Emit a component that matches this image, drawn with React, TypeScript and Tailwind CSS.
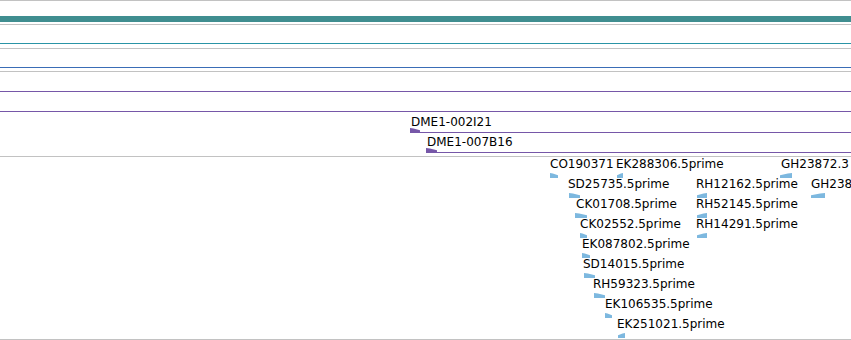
import { ReactNode } from "react"

type Strand = "+" | "-"

interface EstFeature {
  name: string
  row: number
  x: number
  shapeX: number
  width: number
  strand: Strand
}

// EST track, one label + arrowhead per feature, 20px rows
const estFeatures: EstFeature[] = [
  { name: "CO190371", row: 0, x: 550, shapeX: 550, width: 8, strand: "+" },
  { name: "EK288306.5prime", row: 0, x: 616, shapeX: 617, width: 6, strand: "-" },
  { name: "GH23872.3", row: 0, x: 781, shapeX: 780, width: 12, strand: "-" },
  { name: "SD25735.5prime", row: 1, x: 568, shapeX: 569, width: 11, strand: "+" },
  { name: "RH12162.5prime", row: 1, x: 696, shapeX: 697, width: 10, strand: "-" },
  { name: "GH23872.5prime", row: 1, x: 811, shapeX: 811, width: 14, strand: "-" },
  { name: "CK01708.5prime", row: 2, x: 576, shapeX: 575, width: 12, strand: "+" },
  { name: "RH52145.5prime", row: 2, x: 696, shapeX: 697, width: 10, strand: "-" },
  { name: "CK02552.5prime", row: 3, x: 580, shapeX: 580, width: 7, strand: "+" },
  { name: "RH14291.5prime", row: 3, x: 696, shapeX: 697, width: 10, strand: "-" },
  { name: "EK087802.5prime", row: 4, x: 582, shapeX: 582, width: 8, strand: "+" },
  { name: "SD14015.5prime", row: 5, x: 583, shapeX: 584, width: 11, strand: "+" },
  { name: "RH59323.5prime", row: 6, x: 593, shapeX: 594, width: 11, strand: "+" },
  { name: "EK106535.5prime", row: 7, x: 605, shapeX: 605, width: 7, strand: "+" },
  { name: "EK251021.5prime", row: 8, x: 617, shapeX: 618, width: 7, strand: "-" },
]

function arrowPoints(width: number, strand: Strand) {
  const w = width
  if (strand === "+") return `0,0 ${w * 0.35},0.6 ${w},2.2 ${w},5 0,5`
  return `${w},0 ${w * 0.65},0.6 0,2.2 0,5 ${w},5`
}

function Arrow(props: { width: number; strand: Strand; color: string }) {
  return (
    <svg width={props.width} height={5} className="block">
      <polygon points={arrowPoints(props.width, props.strand)} fill={props.color} />
    </svg>
  )
}

function Label(props: { children: ReactNode }) {
  return (
    <div className="whitespace-nowrap font-['DejaVu_Sans',sans-serif] text-[12px] leading-[12px] text-black">
      {props.children}
    </div>
  )
}

function Track(props: { height: string; children?: ReactNode }) {
  return (
    <div className={`relative shrink-0 border-t border-[#c2c2c2] ${props.height}`}>
      {props.children}
    </div>
  )
}

export default function App() {
  return (
    <div className="flex h-[340px] w-[851px] flex-col overflow-hidden bg-white">
      <Track height="h-[24px]">
        <div className="mt-[15px] h-[6px] bg-[#408e90]" />
      </Track>

      <Track height="h-[24px]">
        <div className="mt-[18px] h-px bg-[#2a94a6]" />
      </Track>

      <Track height="h-[23px]">
        <div className="mt-[18px] h-px bg-[#3a6db6]" />
      </Track>

      {/* clone track */}
      <Track height="h-[85px]">
        <div className="absolute left-0 right-0 top-[19px] h-px bg-[#7657a8]" />
        <div className="absolute left-0 right-0 top-[39px] h-px bg-[#7657a8]" />

        <div className="absolute left-[410px] right-0 top-[44px] flex flex-col">
          <div className="pl-px">
            <Label>DME1-002I21</Label>
          </div>
          <div className="flex items-end">
            <Arrow width={10} strand="+" color="#7657a8" />
            <div className="h-px flex-1 bg-[#7657a8]" />
          </div>
        </div>

        <div className="absolute left-[426px] right-0 top-[64px] flex flex-col">
          <div className="pl-px">
            <Label>DME1-007B16</Label>
          </div>
          <div className="flex items-end">
            <Arrow width={11} strand="+" color="#7657a8" />
            <div className="h-px flex-1 bg-[#7657a8]" />
          </div>
        </div>
      </Track>

      {/* EST track */}
      <Track height="h-[183px]">
        {estFeatures.map((f) => (
          <div key={f.name + f.row} className="contents">
            <div className="absolute" style={{ left: f.x, top: f.row * 20 + 1 }}>
              <Label>{f.name}</Label>
            </div>
            <div className="absolute" style={{ left: f.shapeX, top: f.row * 20 + 16 }}>
              <Arrow width={f.width} strand={f.strand} color="#7db8df" />
            </div>
          </div>
        ))}
      </Track>

      <div className="h-px shrink-0 border-t border-[#c2c2c2]" />
    </div>
  )
}
